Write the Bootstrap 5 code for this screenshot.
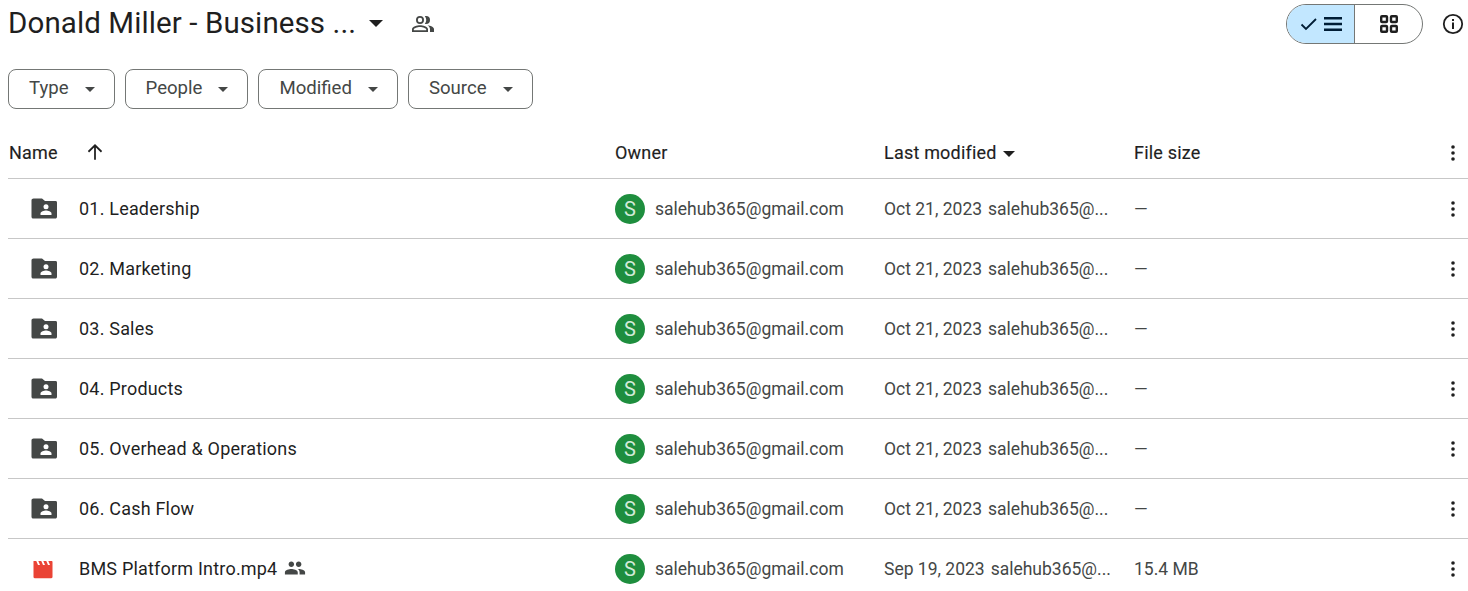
<!DOCTYPE html>
<html lang="en">
<head>
<meta charset="utf-8">
<title>Donald Miller - Business</title>
<link href="https://cdn.jsdelivr.net/npm/bootstrap@5.3.0/dist/css/bootstrap.min.css" rel="stylesheet">
<style>
html,body{height:591px;overflow:hidden}
body{font-family:Roboto,"Liberation Sans",sans-serif;background:#fff;color:#1f1f1f;padding-left:8px}
.top-bar{height:45px;margin-top:1px}
.doc-title{font-size:29.5px;line-height:45px;font-weight:400;margin:0;width:347px;white-space:nowrap;letter-spacing:.1px;color:#1f1f1f}
.caret{display:inline-block;width:0;height:0;border-left:5px solid transparent;border-right:5px solid transparent;border-top:5px solid currentColor}
.title-caret{border-left-width:7px;border-right-width:7px;border-top-width:7px;margin-left:14px}
.shared-ico{margin-left:28px;width:24px;height:24px}
.view-toggle{width:137px;height:40px;border:1px solid #747775;border-radius:20px;overflow:hidden;margin-right:18px}
.view-on{width:68px;background:#c2e7ff;color:#001d35;border-right:1px solid #747775}
.view-off{flex:1;color:#1f1f1f}
.info-btn{margin-right:3px}
.chip-row{margin-top:23px;gap:10px}
.chip{height:40px;border:1px solid #747775;border-radius:8px;padding:0 19px 0 20px;font-size:18.6px;color:#444746;background:#fff}
.chip .caret{margin-left:16px;color:#444746}
.row-line{display:flex;align-items:center;border-bottom:1px solid #c7c7c7;white-space:nowrap}
.head-line{height:70px;padding-top:17px;font-size:18px;letter-spacing:.2px;color:#1f1f1f;-webkit-text-stroke:.15px #1f1f1f}
.file-line{height:60px;font-size:17.5px;padding-top:1px}
.c-name{width:607px;display:flex;align-items:center;flex:none;padding-left:1px}
.file-line .c-name{font-size:18px;letter-spacing:.2px;margin-top:-2px}
.c-owner{width:269px;display:flex;align-items:center;flex:none;color:#444746}
.c-mod{width:250px;flex:none;color:#444746}
.c-size{flex:1;color:#444746}
.head-line .c-owner,.head-line .c-mod,.head-line .c-size{color:#1f1f1f}
.c-more{width:30px;flex:none;display:flex;justify-content:center;color:#1f1f1f;margin-top:-1px}
.head-line .c-more{margin-top:1px}
.file-ico{width:28px;height:28px;margin-left:21px;margin-right:21px;flex:none}
.avatar{width:30px;height:30px;border-radius:50%;background:#1e8e3e;color:#d3ead9;display:flex;align-items:center;justify-content:center;font-size:20px;margin-right:10px;flex:none;margin-top:-1px}
.mod-date{margin-right:6px}
.sort-arrow{margin-left:26px}
.mod-caret{margin-left:6px;border-left-width:6.5px;border-right-width:6.5px;border-top-width:6.5px;vertical-align:middle}
.people-ico{margin-left:7px}
</style>
</head>
<body>
<div class="d-flex align-items-center top-bar">
  <h1 class="doc-title">Donald Miller - Business ...</h1>
  <span class="caret title-caret"></span>
  <svg class="shared-ico" viewBox="0 0 24 24" fill="#444746"><path d="M9 12a4 4 0 1 0 0-8 4 4 0 0 0 0 8zm0-6.200a2.200 2.200 0 1 1 0 4.400 2.200 2.200 0 0 1 0-4.400zM9 13.200c-2.700 0-8 1.300-8 4V20h16v-2.800c0-2.700-5.300-4-8-4zM2.800 18.200v-1c.2-.8 3.400-2.200 6.200-2.200s6 1.400 6.200 2.200v1H2.800zM15 4c-.4 0-.9.1-1.200.2.900 1 1.400 2.300 1.400 3.800s-.5 2.800-1.400 3.800c.3.1.8.2 1.200.2a4 4 0 0 0 0-8zM16.600 13.300c1.400 1 2.400 2.300 2.400 3.900V20h4v-2.800c0-2.200-3.600-3.500-6.400-3.900z"/></svg>
  <div class="ms-auto d-flex align-items-center">
    <div class="d-flex view-toggle">
      <div class="view-on d-flex align-items-center justify-content-center gap-1">
        <svg width="20" height="20" viewBox="0 0 20 20" fill="none" stroke="currentColor" stroke-width="1.800"><path d="M2.500 10.500l4.500 4.500 10-10"/></svg>
        <svg width="20" height="20" viewBox="0 0 20 20" fill="currentColor"><path d="M1 3h18v2.400H1zM1 8.800h18v2.400H1zM1 14.600h18V17H1z"/></svg>
      </div>
      <div class="view-off d-flex align-items-center justify-content-center">
        <svg width="20" height="20" viewBox="0 0 20 20" fill="none" stroke="currentColor" stroke-width="2.400"><rect x="2.200" y="2.200" width="5.800" height="5.800" rx=".8"/><rect x="12" y="2.200" width="5.800" height="5.800" rx=".8"/><rect x="2.200" y="12" width="5.800" height="5.800" rx=".8"/><rect x="12" y="12" width="5.800" height="5.800" rx=".8"/></svg>
      </div>
    </div>
    <svg class="info-btn" width="24" height="24" viewBox="0 0 24 24"><circle cx="12" cy="12" r="9.200" fill="none" stroke="#1f1f1f" stroke-width="1.800"/><rect x="11" y="10.500" width="2" height="6.500" fill="#1f1f1f"/><rect x="11" y="7" width="2" height="2" fill="#1f1f1f"/></svg>
  </div>
</div>

<div class="d-flex chip-row">
  <div class="chip d-flex align-items-center">Type<span class="caret"></span></div>
  <div class="chip d-flex align-items-center">People<span class="caret"></span></div>
  <div class="chip d-flex align-items-center">Modified<span class="caret"></span></div>
  <div class="chip d-flex align-items-center">Source<span class="caret"></span></div>
</div>

<div class="row-line head-line">
  <div class="c-name">Name
    <svg class="sort-arrow" width="22" height="22" viewBox="0 0 20 20" fill="#1f1f1f"><path d="M9.200 17V5.800L4.600 10.400 3.500 9.200 10 2.700l6.500 6.500-1.100 1.200-4.600-4.600V17z"/></svg>
  </div>
  <div class="c-owner">Owner</div>
  <div class="c-mod">Last modified<span class="caret mod-caret"></span></div>
  <div class="c-size">File size</div>
  <div class="c-more"><svg width="20" height="20" viewBox="0 0 20 20" fill="#1f1f1f"><circle cx="10" cy="4" r="1.800"/><circle cx="10" cy="10" r="1.800"/><circle cx="10" cy="16" r="1.800"/></svg></div>
</div>

<svg width="0" height="0" class="position-absolute">
  <symbol id="folder" viewBox="0 0 28 28"><path fill="#444746" d="M3.500 4.500h8.500l3 2.500h10.500c1 0 1.500.7 1.500 1.700v14c0 1-.7 1.800-1.700 1.800H3.300c-1 0-1.800-.8-1.800-1.800V6.300c0-1 .9-1.800 2-1.800z"/><circle cx="16" cy="12.800" r="2.500" fill="#fff"/><path fill="#fff" d="M10.500 21v-1.500c0-1.800 3.500-2.900 5.500-2.900s5.500 1.100 5.500 2.900V21z"/></symbol>
  <symbol id="dots" viewBox="0 0 20 20"><circle cx="10" cy="4" r="1.800"/><circle cx="10" cy="10" r="1.800"/><circle cx="10" cy="16" r="1.800"/></symbol>
</svg>

<div class="row-line file-line"><div class="c-name"><svg class="file-ico"><use href="#folder"/></svg>01. Leadership</div><div class="c-owner"><span class="avatar">S</span>salehub365@gmail.com</div><div class="c-mod"><span class="mod-date">Oct 21, 2023</span>salehub365@...</div><div class="c-size">—</div><div class="c-more"><svg width="20" height="20" fill="#1f1f1f"><use href="#dots"/></svg></div></div>
<div class="row-line file-line"><div class="c-name"><svg class="file-ico"><use href="#folder"/></svg>02. Marketing</div><div class="c-owner"><span class="avatar">S</span>salehub365@gmail.com</div><div class="c-mod"><span class="mod-date">Oct 21, 2023</span>salehub365@...</div><div class="c-size">—</div><div class="c-more"><svg width="20" height="20" fill="#1f1f1f"><use href="#dots"/></svg></div></div>
<div class="row-line file-line"><div class="c-name"><svg class="file-ico"><use href="#folder"/></svg>03. Sales</div><div class="c-owner"><span class="avatar">S</span>salehub365@gmail.com</div><div class="c-mod"><span class="mod-date">Oct 21, 2023</span>salehub365@...</div><div class="c-size">—</div><div class="c-more"><svg width="20" height="20" fill="#1f1f1f"><use href="#dots"/></svg></div></div>
<div class="row-line file-line"><div class="c-name"><svg class="file-ico"><use href="#folder"/></svg>04. Products</div><div class="c-owner"><span class="avatar">S</span>salehub365@gmail.com</div><div class="c-mod"><span class="mod-date">Oct 21, 2023</span>salehub365@...</div><div class="c-size">—</div><div class="c-more"><svg width="20" height="20" fill="#1f1f1f"><use href="#dots"/></svg></div></div>
<div class="row-line file-line"><div class="c-name"><svg class="file-ico"><use href="#folder"/></svg>05. Overhead &amp; Operations</div><div class="c-owner"><span class="avatar">S</span>salehub365@gmail.com</div><div class="c-mod"><span class="mod-date">Oct 21, 2023</span>salehub365@...</div><div class="c-size">—</div><div class="c-more"><svg width="20" height="20" fill="#1f1f1f"><use href="#dots"/></svg></div></div>
<div class="row-line file-line"><div class="c-name"><svg class="file-ico"><use href="#folder"/></svg>06. Cash Flow</div><div class="c-owner"><span class="avatar">S</span>salehub365@gmail.com</div><div class="c-mod"><span class="mod-date">Oct 21, 2023</span>salehub365@...</div><div class="c-size">—</div><div class="c-more"><svg width="20" height="20" fill="#1f1f1f"><use href="#dots"/></svg></div></div>
<div class="row-line file-line"><div class="c-name">
  <svg class="file-ico" viewBox="0 0 28 28"><path fill="#ea4335" d="M3.500 7h2.800l1.700 4h2l-1.700-4h3l1.700 4h2l-1.700-4h3l1.700 4h2l-1.700-4h3.200c.6 0 1 .4 1 1v15c0 .7-.5 1.200-1.200 1.200H4.700c-.7 0-1.200-.5-1.200-1.200z"/></svg>
  BMS Platform Intro.mp4
  <svg class="people-ico" width="22" height="22" viewBox="0 0 24 24" fill="#444746"><path d="M16 11c1.700 0 3-1.300 3-3s-1.300-3-3-3-3 1.300-3 3 1.300 3 3 3zm-8 0c1.700 0 3-1.300 3-3S9.700 5 8 5 5 6.300 5 8s1.300 3 3 3zm0 2c-2.300 0-7 1.200-7 3.500V19h14v-2.500C15 14.200 10.300 13 8 13zm8 0h-1c1.200.8 2 2 2 3.500V19h6v-2.500c0-2.300-4.700-3.500-7-3.500z"/></svg>
</div><div class="c-owner"><span class="avatar">S</span>salehub365@gmail.com</div><div class="c-mod"><span class="mod-date">Sep 19, 2023</span>salehub365@...</div><div class="c-size">15.4 MB</div><div class="c-more"><svg width="20" height="20" fill="#1f1f1f"><use href="#dots"/></svg></div></div>
<script src="https://cdn.jsdelivr.net/npm/bootstrap@5.3.0/dist/js/bootstrap.bundle.min.js"></script>
</body>
</html>
